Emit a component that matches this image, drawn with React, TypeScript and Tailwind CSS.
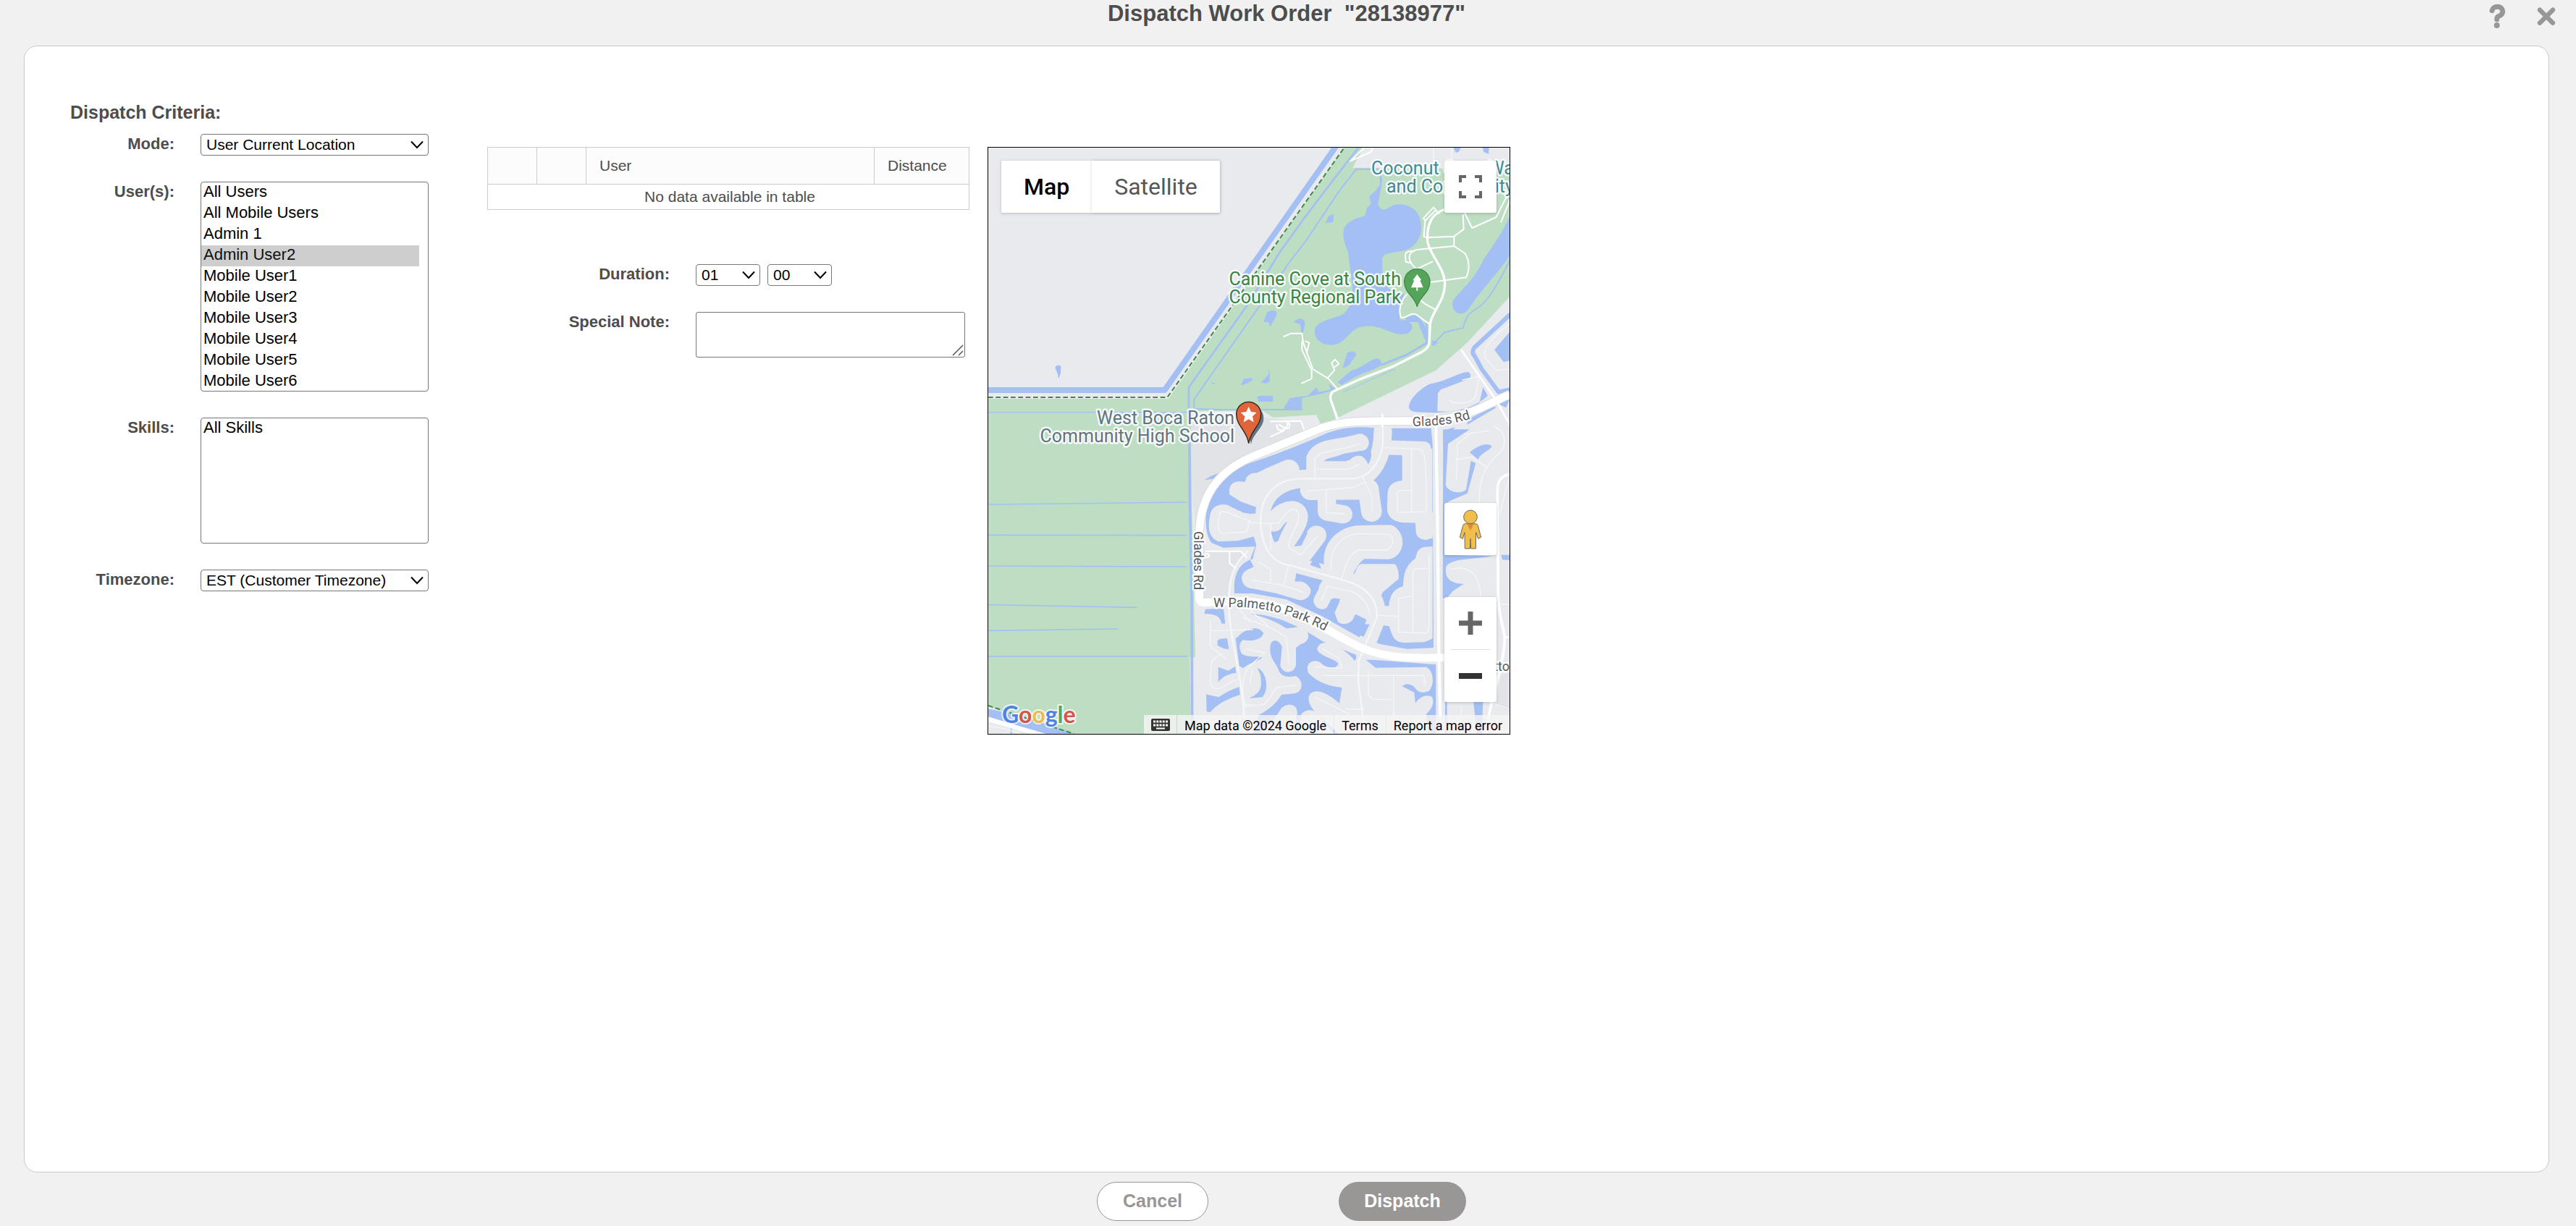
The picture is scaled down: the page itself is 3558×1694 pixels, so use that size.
import React from 'react';

const USERS = [
  'All Users',
  'All Mobile Users',
  'Admin 1',
  'Admin User2',
  'Mobile User1',
  'Mobile User2',
  'Mobile User3',
  'Mobile User4',
  'Mobile User5',
  'Mobile User6',
];

const WATER = '#a4bff4';
const LAND = '#e8eaed';
const PARK = '#bedec3';

interface FieldProps {
  id: string;
  label: string;
  labelClass: string;
  children: React.ReactNode;
}

const Field: React.FC<FieldProps> = ({ id, label, labelClass, children }) => (
  <div className="flex items-start gap-9">
    <label
      htmlFor={id}
      className={`${labelClass} shrink-0 text-right text-[22px] leading-[28px] font-bold text-[#4d4d4d]`}
    >
      {label}
    </label>
    {children}
  </div>
);

interface DropdownProps {
  id: string;
  options: string[];
  className: string;
  ariaLabel?: string;
}

const Dropdown: React.FC<DropdownProps> = ({ id, options, className, ariaLabel }) => (
  <div className={`relative ${className}`}>
    <select
      id={id}
      aria-label={ariaLabel}
      className="block h-[30px] w-full appearance-none rounded-[4px] border border-[#767676] bg-white pl-[7px] text-[21px] leading-[28px] text-black"
    >
      {options.map((option) => (
        <option key={option}>{option}</option>
      ))}
    </select>
    <svg
      viewBox="0 0 18 12"
      className="pointer-events-none absolute top-[9px] right-[7px] h-3 w-[18px]"
      fill="none"
      stroke="#000"
      strokeWidth="2"
    >
      <path d="M1 1.5 L9 10 L17 1.5" />
    </svg>
  </div>
);

const listBox =
  'block w-[315px] overflow-hidden rounded-[4px] border border-[#767676] bg-white pr-3 text-[22px] text-black';
const listOption = 'h-[29px] px-[3px] text-[22px] leading-[30px]';

const MapDrawing: React.FC = () => (
  <svg viewBox="0 0 720 810" className="block h-full w-full" preserveAspectRatio="xMinYMin slice">
    <defs>
      <path id="glades-east" d="M586 385 C615 384 640 384 670 373" />
      <path id="palmetto" d="M311 635 L352 635 C395 638 430 648 476 674" />
    </defs>
    <rect width="720" height="810" fill={LAND} />

    <g transform="scale(.33333) translate(-45 -42)" strokeLinecap="round" strokeLinejoin="round">
      {/* School grounds */}
      <path
        fill="#e1e3e6"
        d="M885 1135 L1340 1175 L1360 1230 L1100 1340 C1000 1390 930 1470 905 1600 L890 1500 Z M940 1715 L1090 1715 L1110 1740 C1060 1790 1040 1850 1040 1910 L935 1910 Z M2170 2230 L2206 2215 L2206 2380 L2150 2350 Z"
      />

      {/* Park land */}
      <path
        fill={PARK}
        d="M45 1083 L792 1083 L1522 40 L1600 40 L1555 125 L2206 130 L2206 660 L2030 850 L1900 965 L1425 1195 L1405 1150 L1225 1160 L1180 1132 L885 1135 L888 1500 L903 2155 L880 2155 L885 2480 L410 2480 L45 2358 Z"
      />

      {/* Boundary canal */}
      <path d="M30 1047 L776 1047 L1492 28" fill="none" stroke={WATER} strokeWidth="24" />
      <path
        d="M45 1077 L787 1077 L1520 42"
        fill="none"
        stroke="#3f8a48"
        strokeWidth="6"
        strokeDasharray="20 11"
        strokeLinecap="butt"
      />

      {/* Park streams */}
      <g fill="none" stroke={WATER}>
        <path strokeWidth="8" d="M1580 40 L1475 175 L1350 340 L1250 480 L1115 700 L876 1035 L876 1145" />
        <path strokeWidth="6" d="M1660 131 L1570 131 L1500 220 L1360 430 L1290 520 L1245 590 L1140 740 L898 1085 L898 1125 L1000 1128 L1345 1128" />
        <path strokeWidth="4" d="M45 1139 L870 1139" />
        <path strokeWidth="11" d="M878 1230 L880 1500 L888 1900 L890 2475" />
        <path strokeWidth="5" d="M47 1521 L866 1512 M47 1648 L866 1649 M47 1776 L866 1779 M47 1937 L660 1948 M47 2044 L580 2037 M47 2151 L868 2151 M140 2400 L140 2475" />
        <path strokeWidth="18" d="M2206 735 L2060 870 Q2045 890 2060 905 L2090 960 L2160 1055 L2206 1045" />
        <path strokeWidth="6" d="M2206 510 C2150 620 2110 690 2060 715 C2030 730 2020 760 2012 790 L1960 802 L1935 808 L1885 860" />
        <path strokeWidth="9" d="M1860 770 L1865 850 L1780 900 L1680 940 L1600 955" />
        <path strokeWidth="3" d="M1515 1055 L1730 960" />
      </g>

      <g fill={WATER} transform="translate(1080 0)">
        <path d="M586 130 C600 160 597 190 592 210 L580 275 C590 303 608 303 625 290 C660 265 730 275 752 330 C775 400 740 455 690 468 C640 480 600 475 598 505 C595 560 600 610 640 640 L690 650 C670 690 665 725 672 758 C700 752 725 770 722 790 C715 815 690 820 650 812 C600 795 560 770 500 788 C460 800 440 862 385 860 C330 858 310 820 320 790 C335 760 380 755 430 735 C470 715 480 640 472 600 L455 470 C440 440 430 400 440 375 C455 345 490 335 525 325 L535 290 L552 275 L543 245 L575 215 L588 195 Z" />
        <path d="M1126 325 L1126 490 C1080 560 1000 640 960 705 C945 730 925 735 905 725 C885 710 885 685 895 670 C930 630 990 570 1010 520 C1030 480 1085 420 1126 325 Z" />
        <path d="M362 355 L375 325 L397 318 L394 350 Z" />
        <path d="M106 765 L118 730 C125 715 155 710 160 725 C162 745 140 765 135 785 L125 765 Z" />
        <path d="M230 765 C250 745 272 745 278 770 L272 805 L262 812 L258 775 Z" />
        <path d="M433 955 L452 895 C470 880 495 890 488 905 C470 920 470 950 433 955 Z" />
        <path d="M412 1015 L470 965 C520 955 560 905 585 918 C605 935 590 950 560 962 L500 985 L430 1025 Z" />
        <path d="M95 1015 L125 985 L130 955 L132 1010 L120 1020 Z M12 1028 L30 1000 L65 1003 L40 1018 Z M78 1075 L90 1070 L145 1070 L145 1095 L85 1095 Z" />
        <path d="M190 1120 L215 1080 L290 1070 L325 1035 L335 1055 L385 1045 L375 1020 L405 1045 L345 1062 L265 1080 L265 1130 L190 1130 Z" />
        <path d="M690 745 L740 735 C770 760 790 800 785 860 L765 815 L745 765 L700 765 Z M803 840 L830 850 L808 865 Z" />
        <path d="M892 42 L922 42 Q918 65 902 62 Z M1014 42 L1040 42 L1038 68 L1018 60 Z" />
        <path d="M708 1115 C715 1070 780 1025 800 1020 C860 1012 920 970 955 972 C970 985 965 1000 945 1005 L840 1045 L828 1060 L826 1135 C900 1140 960 1130 1000 1100 L1015 1035 L1035 1070 C980 1120 900 1150 740 1138 C720 1135 708 1130 708 1115 Z" />
        <path d="M1062 880 L1126 805 L1126 925 L1100 930 Z M1080 1105 L1126 1085 L1110 1120 Z M950 1170 L1060 1115 L1070 1120 L950 1190 Z" />
        <path d="M300 1260 C400 1200 480 1195 580 1205 L580 1230 L400 1240 L340 1265 Z M630 1205 L800 1205 L800 1265 L740 1250 L625 1245 Z M850 1280 L850 1215 L900 1200 L870 1240 Z" />
      </g>
      <path fill={WATER} d="M322 955 C325 942 345 942 346 950 L344 980 L336 1000 L332 978 Z M1093 1025 L1105 1000 L1138 997 L1120 1012 Z M968 1016 L988 1018 L975 1023 Z" />
      <path fill={WATER} d="M45 2368 L150 2390 L370 2460 L410 2478 L290 2478 L45 2400 Z" />

      {/* Lake district north of Palmetto Park Rd */}
      <g transform="translate(1080 1230)">
        <path fill={WATER} d="M-140 190 C-60 140 30 145 370 -5 L480 -22 L800 -22 L806 40 L810 885 L700 890 L590 870 L500 840 L350 755 L200 685 L60 660 L-15 660 C-20 590 0 540 50 520 L80 440 L80 465 L-60 470 L-110 450 C-150 400 -140 250 -70 180 Z" />
        <g fill="none" stroke={LAND}>
          <path strokeWidth="74" d="M320 184 C170 175 100 250 95 340 C92 440 130 520 210 542 C300 562 400 585 485 620 C560 650 582 710 572 770 L540 850" />
          <path strokeWidth="76" d="M300 190 L490 184 C560 170 600 90 600 -10" />
          <path strokeWidth="90" d="M70 215 L140 180 L210 150" />
          <path strokeWidth="74" d="M320 160 L320 100 C340 50 430 60 505 35" />
          <path strokeWidth="76" d="M330 150 L460 150 L502 122" />
          <path strokeWidth="86" d="M300 230 L540 228 L553 320" />
          <path strokeWidth="76" d="M368 235 L368 320 L436 332" />
          <path strokeWidth="78" d="M148 365 C180 315 240 300 250 335 C258 370 205 420 200 470" />
          <path strokeWidth="82" d="M180 480 L268 495 L325 420" />
          <path strokeWidth="88" d="M425 590 C360 500 430 425 500 422 L625 420 C645 440 640 470 620 474 L520 472 C480 480 440 540 425 595" />
          <path strokeWidth="60" d="M610 55 L770 60 L770 190" />
          <path strokeWidth="70" d="M375 640 L348 690" />
          <path strokeWidth="76" d="M372 642 L500 650" />
          <path strokeWidth="84" d="M440 745 L468 690 L550 730" />
          <path strokeWidth="76" d="M770 335 L775 400" />
        </g>
        <g fill={LAND}>
          <path d="M680 60 L805 60 L805 370 L680 366 C640 360 615 340 618 300 L620 240 C625 205 650 195 680 192 Z" />
          <path d="M740 380 L806 370 L806 432 L760 432 C735 425 735 400 740 380 Z" />
          <path d="M510 538 L650 538 C662 550 668 580 665 600 L600 655 C585 680 590 700 580 720 L500 640 L472 600 C490 570 490 545 510 538 Z" />
          <path d="M806 465 L770 468 C740 475 740 500 735 515 C695 540 685 580 684 630 C650 640 630 660 625 712 L580 712 L580 790 L625 795 C640 830 640 862 690 864 L770 862 C800 850 806 850 806 840 Z" />
          <path d="M-35 250 C-42 200 -10 190 30 198 L35 178 C60 150 95 160 105 180 L140 240 L90 310 L20 285 Z" />
          <path d="M-115 330 C-105 290 -60 285 -30 297 L20 325 L110 340 L100 440 L80 420 L0 442 L-80 445 C-120 430 -128 390 -115 330 Z" />
          <path d="M80 440 L130 440 L210 540 L120 560 L60 520 Z" />
          <path d="M15 595 C20 560 50 560 65 550 L50 520 L130 500 L245 560 L235 610 L290 612 C315 640 300 690 255 688 L160 660 L60 640 C35 640 15 620 15 595 Z" />
        </g>
        <g fill={WATER}>
          <path d="M360 108 L440 80 L530 65 C555 60 560 90 540 125 C520 80 490 80 460 108 Z" />
          <path d="M0 275 L75 302 L72 330 L0 315 L-60 285 Z" />
          <path d="M232 465 L280 395 L288 410 L262 462 Z" />
          <path d="M298 542 L322 500 L345 558 Z" />
          <path d="M240 576 L352 606 L330 625 L308 660 C300 630 280 610 240 603 Z" />
          <path d="M385 685 C400 675 420 680 420 695 L400 740 L415 780 L365 750 L360 735 Z" />
          <path d="M465 782 L545 788 L520 840 L420 790 Z" />
          <path d="M650 205 L650 205 Z" />
        </g>
      </g>

      {/* Lake district south of Palmetto Park Rd */}
      <g transform="translate(1080 1230)">
        <path fill={WATER} d="M60 745 C150 750 250 790 350 858 L490 915 L488 935 L560 935 L820 955 L820 1245 L0 1245 L0 760 Z" />
        <g fill={LAND}>
          <path d="M-4 745 C60 735 150 770 200 805 L255 798 C300 805 305 860 260 870 L240 885 L240 955 C235 995 185 995 175 960 L182 880 C168 850 142 850 135 870 C125 920 150 940 165 970 C175 1000 190 1010 240 1003 C272 1020 272 1070 230 1075 L180 1080 C150 1130 110 1150 85 1165 L60 1245 L-4 1245 Z" />
          <path d="M90 1245 L150 1180 L180 1135 C210 1110 250 1120 245 1160 L230 1245 Z M262 1160 C290 1130 330 1145 345 1180 L400 1245 L250 1245 Z" />
          <path d="M328 892 C330 855 395 855 420 885 C450 900 490 940 480 940 L500 925 L530 935 L570 968 L780 965 C812 980 815 1040 790 1065 C750 1080 740 1060 728 1045 C700 1028 690 1038 680 1045 L730 1070 L735 1115 C750 1090 780 1075 805 1090 C815 1120 800 1140 780 1160 L790 1245 L420 1245 L350 1180 C300 1140 280 1100 300 1075 C330 1050 380 1080 420 1115 L430 1050 C380 1045 330 1030 292 990 C275 950 310 930 340 945 C370 975 410 975 415 950 C400 930 335 920 328 892 Z" />
        </g>
        <g fill={WATER}>
          <path d="M0 840 C30 805 85 790 105 825 C100 850 60 860 20 853 C0 870 5 890 15 910 C40 928 80 918 100 925 C90 940 60 940 20 970 L5 960 L-10 845 Z" />
          <path d="M80 968 C120 985 130 1060 100 1090 L45 1095 C85 1075 105 1060 92 995 Z" />
          <path d="M-140 745 L-135 725 L-60 722 L-53 785 L-68 785 C-75 750 -100 745 -140 745 Z" />
          <path d="M-85 855 L-75 848 L-45 846 L-38 892 L-60 888 L-85 875 Z" />
          <path d="M-82 965 L-40 980 L-12 962 L-8 990 C-40 990 -70 1010 -82 1028 Z" />
          <path d="M-132 1078 L-80 1090 C-50 1070 -20 1055 5 1048 L8 1080 C-40 1095 -90 1120 -115 1152 L-130 1150 Z" />
        </g>
        <path fill={WATER} d="M850 -20 L960 -20 L870 40 L860 210 C870 240 920 250 945 230 L965 110 L985 120 L950 245 L880 275 L855 290 L855 500 L1050 505 C1000 520 880 510 862 550 C855 590 875 620 935 620 L890 650 L865 680 L848 680 Z M960 75 C1000 40 1040 35 1052 50 C1040 70 1000 80 995 105 Z M1090 500 L1126 500 L1126 522 L1095 520 Z M975 1105 L1015 1105 L1010 1245 L990 1245 Z M858 1105 L866 1105 L866 1245 L858 1245 Z" />
      </g>

      {/* Local streets */}
      <g transform="translate(1080 1230)" fill="none" stroke="#f5f6f7" strokeWidth="4">
        <path strokeWidth="7" d="M600 -40 L600 40 C590 120 540 180 480 184 L250 184 C150 190 95 260 94 350 C92 450 130 530 210 542 L420 600 C540 630 580 690 575 760 L500 940 L498 1020 L525 1240" />
        <path d="M318 184 L318 100 C350 60 430 70 500 40 M322 145 L460 145 L500 125 M365 230 L365 325 L440 330 M290 235 L480 220 L520 200 M515 175 L555 260 L555 320 M610 55 L750 62 C775 70 780 90 780 320 L660 325 L660 250 Q660 235 675 233 L720 233 M720 60 L720 325" />
        <path d="M385 560 C380 450 450 415 500 412 L630 415 C650 440 640 478 610 480 L510 480 C460 480 440 560 430 600 M725 825 L725 570 Q728 560 740 558 L785 556 M665 820 L665 680 L725 670 M665 820 L780 825 C795 820 792 780 792 740 L792 500 M575 750 L660 755" />
        <path d="M135 370 L135 480 M40 365 L130 370 L170 368 C190 330 230 290 250 325 C260 380 200 430 210 470 L260 500 L330 420 M210 540 L190 620 M60 605 L180 625 L270 655 M85 530 L135 560 L135 610 M345 690 L370 630 L480 655 C520 680 545 710 545 750" />
        <path d="M20 760 L130 800 L200 840 L210 950 M130 800 L40 720 M30 890 L110 905 L60 950 C20 980 10 1040 30 1130 L110 1120 L160 1050 L240 1040 M350 890 L420 930 L430 970 L320 965 M350 1000 L770 1000 L775 1040 M540 980 L540 1080 L560 1100 L640 1100 M645 1000 L645 1170 M320 1090 L460 1160 M450 1140 L520 1140" />
        <path d="M1000 280 C1000 150 1040 120 1080 80 C1120 50 1110 -20 1060 -30 M900 105 L970 95 L1035 140 M905 190 L910 40 L960 0 M880 560 C960 540 1000 580 1005 670 M1085 330 L1120 190 M1090 705 L1126 705 M1040 1110 L1126 1140 M925 1130 L925 1240" />
      </g>
      <g fill="none" stroke="#f5f6f7" strokeWidth="4">
        <path d="M1005 1555 C1030 1540 1060 1570 1130 1590 L1115 1635 L1020 1640 C1000 1640 990 1620 1005 1555 Z" />
        <path d="M965 2000 L965 2110 L1030 2160 M970 2045 L1140 2040 M1090 1960 L1130 2010 M1090 2245 C1040 2250 1020 2290 985 2285 C950 2270 970 2220 970 2170 L1010 2140 M1110 2350 L1140 2350 M1140 2200 L1130 2260" />
        <path strokeWidth="8" d="M1120 1715 C1060 1770 1040 1830 1042 1940 C1045 2100 1100 2200 1110 2475" />
        <path d="M1890 42 L1890 140 M1965 42 L1965 130 M2206 770 C2140 820 2080 880 2110 920 L2150 965 L2206 960 M1955 1090 C1970 1105 2050 1110 2065 1070 L2080 990 L2010 1005 M2020 1230 L2120 1215 M50 2440 L110 2450 L180 2470" />
      </g>
      <g fill="none" stroke="#fff" strokeWidth="6">
        <path d="M1215 1177 L1340 1175 L1365 1240 M1290 1180 C1300 1210 1285 1215 1250 1190 M1240 1190 C1240 1230 1290 1215 1285 1180 M1215 1240 L1270 1215 M945 1715 L1090 1715 L1115 1740 M1045 1715 L1045 1765 L1070 1785 M945 1725 C965 1725 965 1740 950 1740" />
        <path d="M1270 825 L1300 812 L1345 812 L1350 850 L1390 960 L1455 1000 L1490 1040 M1345 845 L1345 880 L1385 965 L1385 1000 L1345 1018 M1360 845 L1375 850 L1365 890 M1450 998 L1480 965 L1468 935 L1482 920 L1498 938 L1480 952" />
        <path strokeWidth="10" d="M1495 1175 L1465 1090 Q1458 1065 1475 1052 L1590 1000 L1720 950 L1830 895 Q1872 875 1872 850 L1876 770 C1885 720 1935 680 1937 610 C1938 540 1870 480 1865 430 C1862 360 1880 320 1930 300" />
        <path d="M1912 315 L1890 290 L1848 335 L1856 345 L1895 305 M1855 345 L1850 410 L1860 415 L1975 410 L1975 450 L2020 480 C2040 510 2040 550 2025 580 L1875 600 M1975 410 L2015 380 L2012 320 M2020 315 L2050 375 L2150 330 L2185 260 L2206 230 M2206 260 L2170 350 M1975 450 L1820 465 C1770 480 1790 520 1820 545 L1885 515 M1810 470 C1760 470 1775 490 1775 515 L1795 520 M1780 650 C1750 680 1745 720 1755 745 C1780 755 1790 720 1820 735 L1875 775 M1820 660 L1855 690 L1900 715 M1545 98 L1630 60 L1640 40 M1545 98 L1600 45" />
      </g>

      {/* Main roads */}
      <g fill="none" strokeLinecap="butt">
        <path d="M920 1860 L920 1630 C930 1400 1100 1340 1170 1310 L1400 1215 C1500 1170 1600 1175 1860 1175 C2030 1165 2100 1110 2206 1065" stroke="#d9dce0" strokeWidth="38" />
        <path d="M920 1900 L920 1630 C930 1400 1100 1340 1170 1310 L1400 1215 C1500 1170 1600 1175 1860 1175 C2030 1165 2100 1110 2206 1065" stroke="#fff" strokeWidth="32" />
        <path d="M920 1850 L920 1912 Q922 1928 940 1928 L1080 1920 C1300 1925 1420 2030 1540 2090 C1660 2160 1780 2160 1940 2156" stroke="#fff" strokeWidth="32" strokeLinecap="round" />
        <path d="M1900 1185 L1908 1700 L1912 2150 L1920 2475" stroke="#fff" strokeWidth="12" />
        <path d="M2206 1395 C2165 1405 2155 1430 2155 1460 L2158 1900 C2160 2000 2185 2030 2185 2080 C2180 2200 2130 2300 2105 2475" stroke="#fff" strokeWidth="11" />
        <path d="M2005 880 L2150 1090 L2206 1190 M1678 1145 L1678 1200 M2185 2072 L2206 2072" stroke="#fff" strokeWidth="8" />
        <path d="M45 2412 L280 2480" stroke="#fff" strokeWidth="18" />
        <path d="M45 2355 L400 2472" stroke="#3f8a48" strokeWidth="6" strokeDasharray="20 11" />
      </g>
    </g>

    {/* Place names */}
    <g
      className="font-['Roboto',sans-serif]"
      fontSize="25"
      stroke="#fff"
      strokeOpacity="0.85"
      strokeWidth="5"
      strokeLinejoin="round"
      style={{ paintOrder: 'stroke' }}
    >
      <g fill="#5f7582" textAnchor="end">
        <text x="340" y="382">West Boca Raton</text>
        <text x="340" y="407">Community High School</text>
      </g>
      <g fill="#3a8544" textAnchor="end">
        <text x="570" y="190">Canine Cove at South</text>
        <text x="570" y="215">County Regional Park</text>
      </g>
      <g fill="#3f8b93">
        <text x="529" y="37">Coconut Cove Waterpark</text>
        <text x="550" y="62">and Community Center</text>
      </g>
      <g fill="#55595e" fontSize="18">
        <text>
          <textPath href="#glades-east">Glades Rd</textPath>
        </text>
        <text>
          <textPath href="#palmetto">W Palmetto Park Rd</textPath>
        </text>
        <text transform="translate(284 530) rotate(90)">Glades Rd</text>
        <text x="720" y="723" textAnchor="end">tto</text>
      </g>
    </g>

    {/* Markers */}
    <g transform="scale(.33333) translate(-45 -42)">
      <path d="M1822 702 C1815 660 1769 645 1769 598 A53 53 0 0 1 1875 598 C1875 645 1829 660 1822 702 Z" fill="#54a45a" stroke="#3f8a48" strokeWidth="4" />
      <path d="M1822 567 L1840 592 H1834 L1847 622 H1825 V635 H1819 V622 H1797 L1810 592 H1804 Z" fill="#fff" />
      <path d="M1134 1272 C1128 1225 1088 1205 1088 1163 A49 49 0 0 1 1186 1163 C1186 1205 1142 1225 1134 1272 Z" fill="#5f7582" />
      <path d="M1124 1268 C1117 1215 1073 1195 1073 1147 A51 51 0 0 1 1175 1147 C1175 1195 1131 1215 1124 1268 Z" fill="#e0653a" stroke="#26221f" strokeWidth="4" />
      <path d="M1124 1116 L1134 1137 L1157 1140 L1140 1156 L1145 1180 L1124 1168 L1103 1180 L1108 1156 L1091 1140 L1114 1137 Z" fill="#fff" />
    </g>

    <text
      x="19"
      y="795"
      fontSize="32"
      className="font-['Lato',sans-serif] font-bold"
      stroke="#fff"
      strokeOpacity="0.8"
      strokeWidth="4"
      strokeLinejoin="round"
      style={{ paintOrder: 'stroke' }}
    >
      <tspan fill="#4f83e3">G</tspan>
      <tspan fill="#d2574a">o</tspan>
      <tspan fill="#ecbd4a">o</tspan>
      <tspan fill="#4f83e3">g</tspan>
      <tspan fill="#56a55c">l</tspan>
      <tspan fill="#d2574a">e</tspan>
    </text>
  </svg>
);

const controlButton =
  'flex w-[72px] items-center justify-center rounded-[3px] bg-white shadow-[0_1px_4px_rgba(0,0,0,0.2)]';

const MapPanel: React.FC = () => (
  <div className="relative h-[812px] w-[722px] shrink-0 overflow-hidden border border-black font-['Roboto',sans-serif]">
    <MapDrawing />

    <div className="absolute top-[18px] left-[18px] flex h-[72px] text-[32px] shadow-[0_1px_4px_rgba(0,0,0,0.2)]">
      <button className="w-[125px] rounded-l-[3px] bg-white font-medium text-black">Map</button>
      <button className="w-[177px] rounded-r-[3px] bg-white text-[#565656] shadow-[0_0_4px_rgba(0,0,0,0.15)]">
        Satellite
      </button>
    </div>

    <button aria-label="Toggle fullscreen view" className={`${controlButton} absolute top-[18px] right-[18px] h-[72px]`}>
      <svg viewBox="0 0 32 32" className="size-8" fill="none" stroke="#666" strokeWidth="4">
        <path d="M2 10 V2 H10 M22 2 H30 V10 M30 22 V30 H22 M10 30 H2 V22" />
      </svg>
    </button>

    <div className="absolute right-[18px] bottom-[44px] flex flex-col gap-[58px]">
      <button aria-label="Drag Pegman onto the map" className={`${controlButton} h-[72px]`}>
        <svg viewBox="0 0 96 168" className="h-14 w-8" stroke="#6b6659" strokeWidth="3" strokeLinejoin="round">
          <path d="M26 62 H70 Q77 62 79 70 L92 118 L80 124 L71 98 L70 165 H50 L48 124 L46 165 H25 L24 98 L16 124 L4 118 L17 70 Q19 62 26 62 Z" fill="#efbe4b" />
          <path d="M33 60 H63 L48 90 Z" fill="#dd8a38" stroke="none" />
          <circle cx="48" cy="34" r="28" fill="#efbe4b" />
        </svg>
      </button>
      <div className="rounded-[3px] bg-white shadow-[0_1px_4px_rgba(0,0,0,0.2)]">
        <button aria-label="Zoom in" className="flex h-[72px] w-[72px] items-center justify-center">
          <svg viewBox="0 0 32 32" className="size-8" stroke="#666" strokeWidth="7">
            <path d="M0 16 H32 M16 0 V32" />
          </svg>
        </button>
        <div className="mx-[9px] h-px bg-[#e0e0e0]" />
        <button aria-label="Zoom out" className="flex h-[72px] w-[72px] items-center justify-center">
          <svg viewBox="0 0 32 32" className="size-8" stroke="#333" strokeWidth="8">
            <path d="M0 16 H32" />
          </svg>
        </button>
      </div>
    </div>

    <div className="absolute right-0 bottom-0 flex h-[26px] items-stretch gap-px text-[18px] leading-[30px] text-black">
      <button aria-label="Keyboard shortcuts" className="flex w-[45px] items-center justify-center bg-[#f5f5f5]/80">
        <svg viewBox="0 0 26 17" className="h-[17px] w-[26px]">
          <rect width="26" height="17" rx="2" fill="#333" />
          <path d="M3 4 H23 M3 9 H23" stroke="#fff" strokeWidth="3" strokeDasharray="3 1.25" />
          <path d="M7 13.5 H19" stroke="#fff" strokeWidth="2" />
        </svg>
      </button>
      <span className="bg-[#f5f5f5]/80 px-[10px]">Map data ©2024 Google</span>
      <a href="#terms" className="bg-[#f5f5f5]/80 px-[10px]">
        Terms
      </a>
      <a href="#report" className="bg-[#f5f5f5]/80 px-[10px]">
        Report a map error
      </a>
    </div>
  </div>
);

const App: React.FC = () => {
  return (
    <div className="flex min-h-screen flex-col bg-[#f1f1f1] font-['Liberation_Sans',Arial,sans-serif] text-[#4d4d4d]">
      {/* Title bar */}
      <header className="relative flex h-[63px] shrink-0 justify-center pt-px pr-1">
        <h1 className="text-[31px] leading-[36px] font-bold">Dispatch Work Order &nbsp;"28138977"</h1>
        <div className="absolute top-1 right-[25px] flex gap-9 text-[#999696]">
          <button aria-label="Help">
            <svg viewBox="223 12 96 108" className="h-9 w-8" fill="none" stroke="currentColor" strokeLinecap="round">
              <path strokeWidth="21" d="M250 44 C252 33 262 28 272 28 C286 28 294 37 294 48 C294 60 284 65 276 68 C271 70 270 74 270 80" />
              <circle cx="270" cy="105" r="12" fill="currentColor" stroke="none" />
            </svg>
          </button>
          <button aria-label="Close">
            <svg viewBox="429 18 96 108" className="h-9 w-8" stroke="currentColor" strokeLinecap="round" strokeWidth="19">
              <path d="M450 47 L504 101 M504 47 L450 101" />
            </svg>
          </button>
        </div>
      </header>

      {/* Content */}
      <main className="mr-[37px] ml-[33px] flex flex-1 items-start rounded-[18px] border border-[#c8c8c8] bg-white px-[63px] pt-[77px]">
        <section className="flex shrink-0 flex-col">
          <h2 className="mb-4 text-[25px] leading-[28px] font-bold">Dispatch Criteria:</h2>
          <div className="flex flex-col gap-9">
            <Field id="mode" label="Mode:" labelClass="w-36">
              <Dropdown id="mode" className="w-[315px]" options={['User Current Location']} />
            </Field>
            <Field id="users" label="User(s):" labelClass="w-36">
              <select id="users" multiple defaultValue={['Admin User2']} className={`${listBox} h-[290px]`}>
                {USERS.map((user) => (
                  <option key={user} className={listOption}>
                    {user}
                  </option>
                ))}
              </select>
            </Field>
            <Field id="skills" label="Skills:" labelClass="w-36">
              <select id="skills" multiple className={`${listBox} h-[174px]`}>
                <option className={listOption}>All Skills</option>
              </select>
            </Field>
            <Field id="timezone" label="Timezone:" labelClass="w-36">
              <Dropdown id="timezone" className="w-[315px]" options={['EST (Customer Timezone)']} />
            </Field>
          </div>
        </section>

        <section className="mt-[62px] ml-[81px] w-[666px] shrink-0">
          <table className="w-full table-fixed border-collapse border border-[#ccc] text-[21px] leading-[24px]">
            <thead>
              <tr className="h-[51px] bg-[#fcfcfc] text-left">
                <th className="w-[68px] border border-[#ccc]" />
                <th className="w-[68px] border border-[#ccc]" />
                <th className="border border-[#ccc] pl-[18px] font-normal">User</th>
                <th className="w-[131px] border border-[#ccc] pl-[18px] font-normal">Distance</th>
              </tr>
            </thead>
            <tbody>
              <tr className="h-[35px]">
                <td colSpan={4} className="border border-[#ccc] pl-1 text-center">
                  No data available in table
                </td>
              </tr>
            </tbody>
          </table>

          <div className="mt-[75px] flex flex-col gap-9">
            <Field id="duration-hours" label="Duration:" labelClass="w-[252px]">
              <div className="flex gap-[10px]">
                <Dropdown id="duration-hours" className="w-[89px]" options={['01', '02', '03']} />
                <Dropdown id="duration-minutes" ariaLabel="Duration minutes" className="w-[89px]" options={['00', '15', '30', '45']} />
              </div>
            </Field>
            <Field id="special-note" label="Special Note:" labelClass="w-[252px]">
              <div className="relative w-[372px]">
                <textarea
                  id="special-note"
                  className="block h-[63px] w-full resize-none rounded-[3px] border border-[#767676] bg-white text-[21px] text-black"
                />
                <svg
                  viewBox="0 0 16 16"
                  className="pointer-events-none absolute right-[2px] bottom-[2px] size-4"
                  stroke="#555"
                  strokeWidth="1.5"
                >
                  <path d="M1 15 L15 1 M9 15 L15 9" />
                </svg>
              </div>
            </Field>
          </div>
        </section>

        <section className="mt-[62px] ml-[25px]">
          <MapPanel />
        </section>
      </main>

      {/* Actions */}
      <footer className="flex shrink-0 justify-center gap-[180px] pt-[13px] pr-[18px] pb-[7px] text-[25px] font-bold">
        <button className="h-[54px] w-[154px] rounded-full border border-[#999696] bg-white text-[#999696]">Cancel</button>
        <button className="h-[54px] w-[176px] rounded-full bg-[#999696] text-white">Dispatch</button>
      </footer>
    </div>
  );
};

export default App;
